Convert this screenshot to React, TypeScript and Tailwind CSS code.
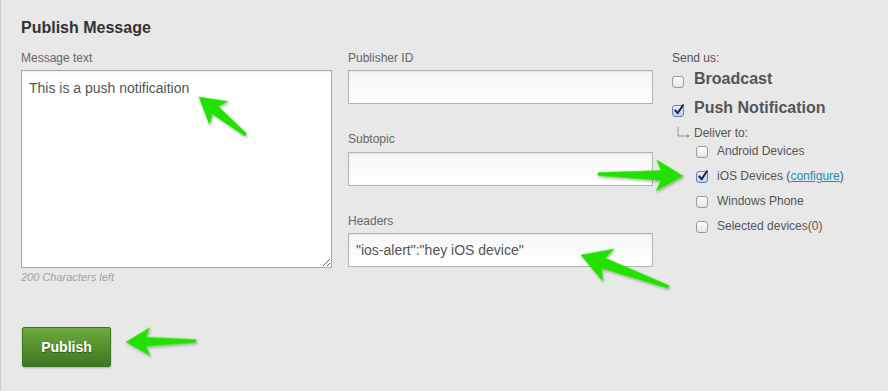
import React from 'react';

const font = { fontFamily: '"Liberation Sans", Arial, Helvetica, sans-serif' };

function Box({ checked, size = 'sm' }: { checked?: boolean; size?: 'sm' | 'lg' }) {
  const dim = size === 'lg' ? 'w-[12px] h-[12px] mt-[7px]' : 'w-[12px] h-[12px] mt-[2px]';
  return (
    <span
      className={`relative shrink-0 rounded-[3px] border ${dim} ${
        checked
          ? 'border-[#6b82a8] bg-linear-to-b from-[#e9f1fb] to-[#bcd3ef]'
          : 'border-[#9a9a9a] bg-linear-to-b from-[#ffffff] to-[#e4e4e4]'
      }`}
    >
      {checked && (
        <svg viewBox="0 0 12 12" className="absolute -top-[2px] left-[0px] w-[12px] h-[12px] overflow-visible">
          <path d="M2.2 6.4 L4.6 9.2 L10 1.2" fill="none" stroke="#14234a" strokeWidth="2" strokeLinecap="round" strokeLinejoin="round" />
        </svg>
      )}
    </span>
  );
}

function Arrow({ x, y, angle, len, s = 1 }: { x: number; y: number; angle: number; len: number; s?: number }) {
  const h = 24 * s;
  const w = 14 * s;
  const pts = `0,0 ${h},${-w} ${h - 4 * s},${-4.5 * s} ${len},-1.5 ${len},1.5 ${h - 4 * s},${4.5 * s} ${h},${w}`;
  return <polygon points={pts} transform={`translate(${x} ${y}) rotate(${angle})`} fill="#22e000" stroke="#30ea10" strokeWidth="0.6" strokeLinejoin="round" />;
}

const inputCls =
  'w-full h-[34px] border border-[#b3b3b3] bg-linear-to-b from-[#f6f6f6] to-[#ffffff] shadow-[inset_0_1px_2px_rgba(0,0,0,0.08)] px-[7px] text-[14px] text-[#555] outline-none';

export default function App() {
  return (
    <div className="relative w-[888px] h-[391px] overflow-hidden bg-[#e8e8e8] border-l border-[#cdcdcd] pl-[20px] pt-[18px]" style={font}>
      <h1 className="h-[20px] leading-[20px] text-[16px] font-bold text-[#333]">Publish Message</h1>

      <div className="flex mt-[13px]">
        <div className="w-[311px] flex flex-col">
          <label className="h-[14px] leading-[14px] text-[12px] text-[#666]">Message text</label>
          <textarea
            className="mt-[5px] w-[311px] h-[198px] border border-[#a9a9a9] bg-white shadow-[inset_0_1px_2px_rgba(0,0,0,0.08)] px-[7px] pt-[8px] pb-[5px] text-[14px] leading-[18px] text-[#555] outline-none"
            style={font}
            defaultValue="This is a push notificaition"
          />
          <div className="mt-[3px] h-[13px] leading-[13px] text-[11px] italic text-[#a3a3a3]">200 Characters left</div>
          <button className="mt-[43px] ml-[1px] w-[89px] h-[40px] rounded-[2px] border border-[#3f7224] bg-linear-to-b from-[#6cab3c] to-[#3c7821] shadow-[0_1px_2px_rgba(0,0,0,0.25)] text-white text-[14px] font-bold [text-shadow:0_1px_1px_rgba(0,0,0,0.4)]">
            Publish
          </button>
        </div>

        <div className="ml-[16px] w-[305px] flex flex-col">
          <label className="h-[14px] leading-[14px] text-[12px] text-[#666]">Publisher ID</label>
          <input className={`mt-[5px] ${inputCls}`} style={font} />
          <label className="mt-[28px] h-[14px] leading-[14px] text-[12px] text-[#666]">Subtopic</label>
          <input className={`mt-[6px] ${inputCls}`} style={font} />
          <label className="mt-[28px] h-[14px] leading-[14px] text-[12px] text-[#666]">Headers</label>
          <input className={`mt-[5px] ${inputCls}`} style={font} defaultValue={'"ios-alert":"hey iOS device"'} />
        </div>

        <div className="ml-[19px] flex flex-col">
          <div className="h-[14px] leading-[14px] text-[12px] text-[#555]">Send us:</div>
          <div className="mt-[4px] flex items-start gap-[10px] h-[20px]">
            <Box size="lg" />
            <span className="leading-[20px] text-[16px] font-bold text-[#555]">Broadcast</span>
          </div>
          <div className="mt-[9px] flex items-start gap-[10px] h-[20px]">
            <Box size="lg" checked />
            <span className="leading-[20px] text-[16px] font-bold text-[#555]">Push Notification</span>
          </div>
          <div className="mt-[8px] ml-[5px] flex items-start gap-[3px] h-[14px]">
            <svg width="14" height="12" viewBox="0 0 14 12" className="mt-[1px]">
              <path d="M1 0 V9 H12" fill="none" stroke="#999" strokeWidth="1" />
              <path d="M10 7 L13 9 L10 11 Z" fill="#999" />
            </svg>
            <span className="leading-[14px] text-[12px] text-[#555]">Deliver to:</span>
          </div>
          <div className="mt-[4px] ml-[24px] flex flex-col gap-[11px]">
            {[
              { label: 'Android Devices' },
              { label: 'iOS Devices', checked: true },
              { label: 'Windows Phone' },
              { label: 'Selected devices(0)' },
            ].map((r) => (
              <div key={r.label} className="flex items-start gap-[9px] h-[14px]">
                <Box checked={r.checked} />
                <span className="leading-[14px] text-[12px] text-[#555]">
                  {r.label}
                  {r.checked && (
                    <>
                      {' ('}
                      <a href="#" className="text-[#1d8cc6] underline">configure</a>
                      {')'}
                    </>
                  )}
                </span>
              </div>
            ))}
          </div>
        </div>
      </div>

      <svg className="absolute inset-0 pointer-events-none" width="888" height="391" viewBox="0 0 888 391">
        <defs>
          <filter id="sh" x="-20%" y="-20%" width="140%" height="140%">
            <feDropShadow dx="1" dy="1.5" stdDeviation="1.2" floodColor="#000" floodOpacity="0.3" />
          </filter>
        </defs>
        <g filter="url(#sh)">
          <Arrow x={198} y={97} angle={39} len={60} s={1.05} />
          <Arrow x={682} y={176} angle={181.3} len={85} s={1.1} />
          <Arrow x={580} y={255} angle={20} len={93} s={1.2} />
          <Arrow x={125} y={342} angle={-0.8} len={70} s={1} />
        </g>
      </svg>
    </div>
  );
}
